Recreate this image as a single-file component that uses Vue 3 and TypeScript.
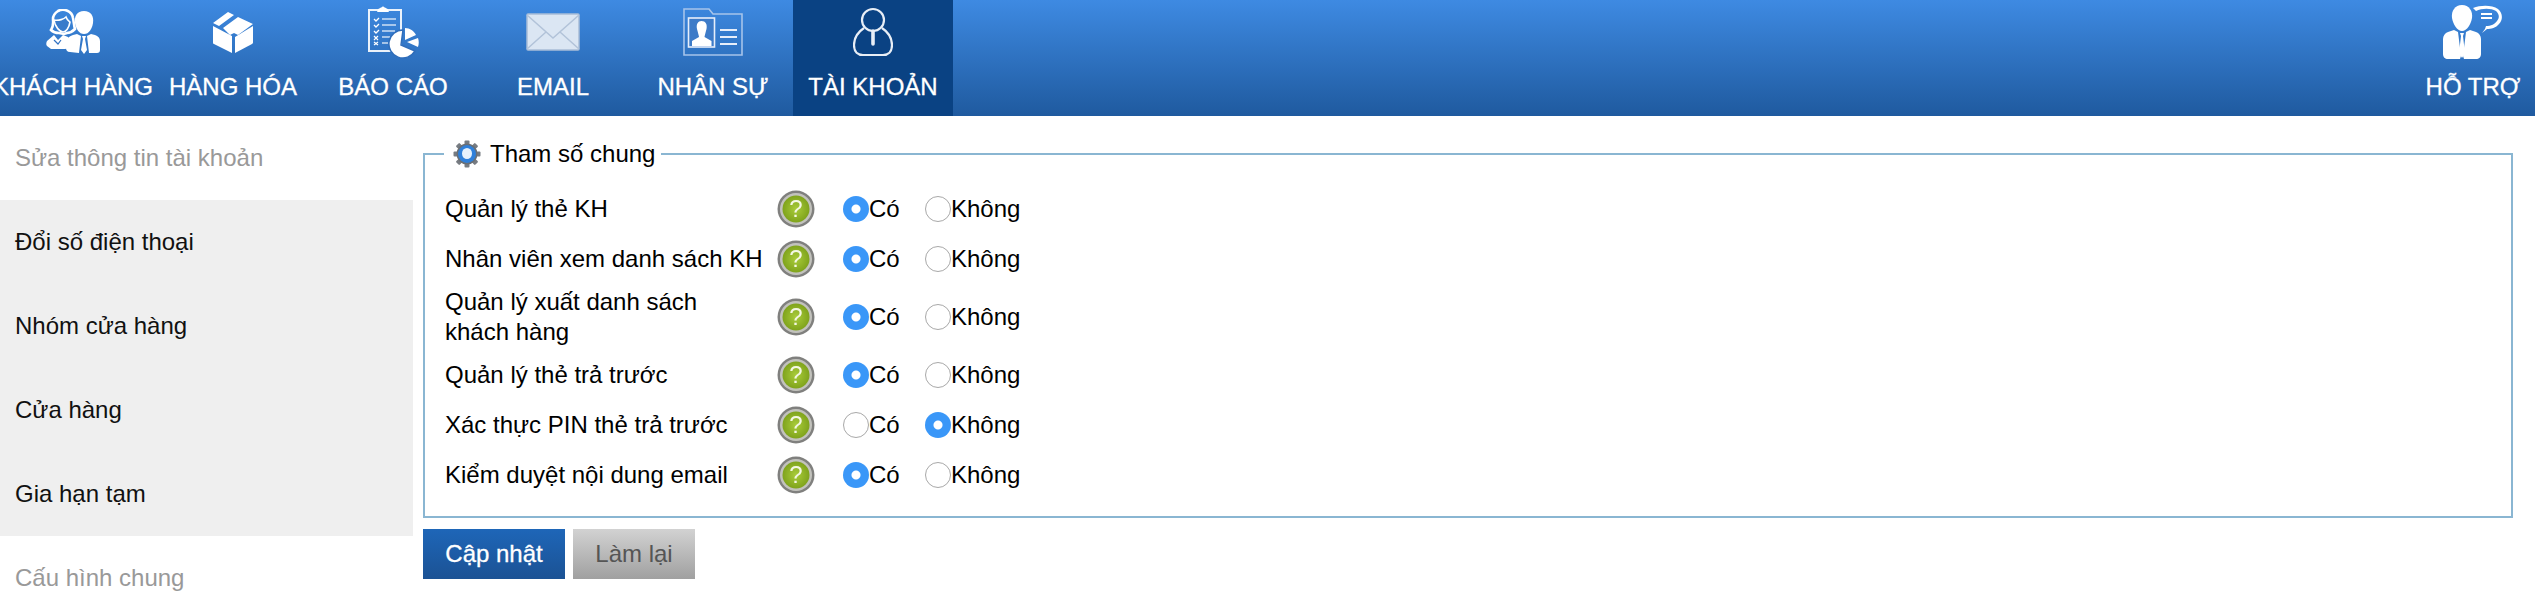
<template>
  <div class="page">
    <header class="topbar">
      <nav class="menu">
        <a v-for="item in menu" :key="item.label" class="menu-item" :class="{ active: item.active }">
          <span class="menu-icon">
            <svg v-if="item.icon === 'customer'" width="54" height="46" viewBox="0 0 54 46">
              <path d="M12 2c6-3 14 0 15 7 1 5 1 8 2 11-3 3-5 4-8 4l-3 1-5-1c-3 0-6-1-8-3 3-4 2-8 2-11 0-4 2-6 5-8z" fill="none" stroke="#fff" stroke-width="2.6" />
              <path d="M8 11c5 1 10-1 12-3 1 3 3 4 4 5-1 6-4 10-7 10s-8-5-9-12z" fill="#3a7ccb" stroke="#fff" stroke-width="1.6" />
              <path d="M8 26 1 32c-1 2-1 4 0 5l4 3h14c2 0 3-1 3-3v-9l-5-2-5 5z" fill="#fff" />
              <path d="M38 2c7 0 10 5 9 12-1 6-4 11-9 11s-8-5-9-11c-1-7 2-12 9-12z" fill="#fff" />
              <path d="M31 25l4 2-2 17-9-1c-3 0-4-2-4-4V34c0-5 4-7 7-8zM45 25l-4 2 2 17h8c2 0 3-1 3-3V32c0-3-2-5-5-6z" fill="#fff" />
              <path d="M36 27h4l-1 3 2 11-3 4-3-4 2-11z" fill="#fff" />
              <path d="M8 31l4 4 3-4" fill="none" stroke="#3272c2" stroke-width="1.200" />
            </svg>
            <svg v-else-if="item.icon === 'box'" width="42" height="44" viewBox="0 0 42 44">
              <path d="M1 13 16 2l6 3L7 16zM11 18 26 7l15 7-15 11-4-2-4 2z" fill="#fff" />
              <path d="M1 16l19 10v17L2 34c-1 0-1-1-1-2z" fill="#fff" />
              <path d="M41 16 23 27v16l17-9c1-1 1-1 1-2z" fill="#fff" />
            </svg>
            <svg v-else-if="item.icon === 'report'" width="54" height="54" viewBox="0 0 54 54">
              <path d="M3 5h32v41H3z" fill="none" stroke="#fff" stroke-width="2" opacity=".9" />
              <path d="M12 5c0-2 4-2 5-4 1 2 5 2 5 4l1 2H11z" fill="#fff" />
              <path d="M8 14l2 2 3-3M8 20l2 2 3-3M8 26l2 2 3-3" fill="none" stroke="#fff" stroke-width="1.300" />
              <path d="M8 31l4 4m0-4-4 4M8 37l4 3m0-3-4 3" stroke="#fff" stroke-width="1.200" />
              <path d="M16 14h14M16 20h14M16 26h13M16 32h8M16 38h6" stroke="#fff" stroke-width="1.600" opacity=".75" />
              <path d="M37 25a14 14 0 1 0 12 21l-14-6z" fill="#fff" stroke="#2f6dba" stroke-width="1.500" />
              <path d="M39 23c5 0 9 3 11 7l-11 5zM52 33c1 3 1 6 0 9l-11-5z" fill="#fff" />
            </svg>
            <svg v-else-if="item.icon === 'mail'" width="54" height="38" viewBox="0 0 54 38">
              <rect x="1" y="1" width="52" height="36" rx="1" fill="#dbe6f3" stroke="#a9bdd8" stroke-width="1.500" />
              <path d="M1 2 27 25 53 2M1 36l19-17M53 36 34 19" fill="none" stroke="#b2c3d9" stroke-width="1.500" />
            </svg>
            <svg v-else-if="item.icon === 'staff'" width="60" height="50" viewBox="0 0 60 50">
              <path d="M1 48V2h25l4 5h29v41z" fill="none" stroke="#a6c4ea" stroke-width="1.600" />
              <rect x="5.500" y="11" width="26" height="29" fill="#3d7bc8" stroke="#e6eefa" stroke-width="1.600" />
              <path d="M18.500 14c4 0 6 3 5 8-1 4-2 7-2 8l7 4v5H9v-5l7-4c0-1-1-4-2-8-1-5 1-8 4.500-8z" fill="#fff" />
              <path d="M37 23h17M37 30h17M37 37h17" stroke="#e6eefa" stroke-width="2.200" />
            </svg>
            <svg v-else-if="item.icon === 'account'" width="40" height="50" viewBox="0 0 40 50">
              <circle cx="20" cy="13" r="11" fill="none" stroke="#e8eef6" stroke-width="2.200" />
              <path d="M11 21C5 25 1 30 1 38c0 7 4 10 9 10h20c5 0 9-3 9-10 0-8-4-13-10-17" fill="none" stroke="#e8eef6" stroke-width="2.200" />
              <path d="M20 24v13" stroke="#e8eef6" stroke-width="3.600" stroke-linecap="round" />
            </svg>
          </span>
          <span class="menu-text">{{ item.label }}</span>
        </a>
      </nav>
      <a class="menu-item support">
        <span class="menu-icon">
          <svg width="62" height="56" viewBox="0 0 62 56">
            <path d="M20 1c7 0 11 6 10 13-1 6-5 13-10 13S11 20 10 14C9 7 13 1 20 1z" fill="#fff" />
            <path d="M12 26 6 28c-3 1-5 4-5 7v15c0 3 2 5 5 5h12l1-3-3-24zM28 26l6 2c3 1 5 4 5 7v15c0 3-2 5-5 5H22l-1-3 3-24z" fill="#fff" />
            <path d="M18 29h4l-1 3 2 17-3 5-3-5 2-17z" fill="#fff" />
            <path d="M31 4c8-3 19-3 25 1 5 4 5 11 1 15-3 4-8 5-12 5l-5 4 3-4 1-3c5 0 9-2 11-5 3-4 2-7-1-10-5-3-14-3-20 0z" fill="#fff" />
            <path d="M39 10h11M39 14h11" stroke="#fff" stroke-width="2" />
          </svg>
        </span>
        <span class="menu-text">HỖ TRỢ</span>
      </a>
    </header>

    <div class="body">
      <aside class="sidebar">
        <div v-for="link in links" :key="link.label" class="side-item" :class="{ muted: link.muted }">
          {{ link.label }}
        </div>
      </aside>

      <main class="content">
        <fieldset class="box">
          <legend class="box-title">
            <svg class="soft" width="28" height="28" viewBox="0 0 28 28">
              <g fill="#777c82">
                <rect v-for="deg in [0, 45, 90, 135, 180, 225, 270, 315]" :key="deg" x="11.500" y="0.500" width="5" height="5" rx="1" :transform="`rotate(${deg} 14 14)`" />
              </g>
              <circle cx="14" cy="14" r="10.500" fill="#6a6f75" />
              <circle cx="14" cy="14" r="9" fill="#2f80da" />
              <ellipse cx="14" cy="13.500" rx="5" ry="5.500" fill="#e6f1fc" />
            </svg>
            <span>Tham số chung</span>
          </legend>
          <div v-for="(row, i) in rows" :key="row.label" class="row" :class="{ tall: row.tall }">
            <div class="row-label">{{ row.label }}</div>
            <svg class="help soft" width="38" height="38" viewBox="0 0 38 38">
              <defs>
                <radialGradient id="helpFill">
                  <stop offset="0" stop-color="#a9cc3a" />
                  <stop offset="1" stop-color="#7fa31c" />
                </radialGradient>
              </defs>
              <circle cx="19" cy="19" r="18.500" fill="#80807e" />
              <circle cx="19" cy="19" r="16" fill="#c2c2bd" />
              <circle cx="19" cy="19" r="13.500" fill="url(#helpFill)" />
              <text x="19" y="27" text-anchor="middle" class="help-mark">?</text>
            </svg>
            <label class="choice">
              <input type="radio" :name="`opt${i}`" :checked="row.on" />Có
            </label>
            <label class="choice">
              <input type="radio" :name="`opt${i}`" :checked="!row.on" />Không
            </label>
          </div>
        </fieldset>
        <div class="actions">
          <button class="btn primary">Cập nhật</button>
          <button class="btn reset">Làm lại</button>
        </div>
      </main>
    </div>
  </div>
</template>

<script setup lang="ts">
type MenuItem = { label: string; icon: string; active?: boolean }

const menu: MenuItem[] = [
  { label: 'KHÁCH HÀNG', icon: 'customer' },
  { label: 'HÀNG HÓA', icon: 'box' },
  { label: 'BÁO CÁO', icon: 'report' },
  { label: 'EMAIL', icon: 'mail' },
  { label: 'NHÂN SỰ', icon: 'staff' },
  { label: 'TÀI KHOẢN', icon: 'account', active: true },
]

const links = [
  { label: 'Sửa thông tin tài khoản', muted: true },
  { label: 'Đổi số điện thoại' },
  { label: 'Nhóm cửa hàng' },
  { label: 'Cửa hàng' },
  { label: 'Gia hạn tạm' },
  { label: 'Cấu hình chung', muted: true },
]

const rows = [
  { label: 'Quản lý thẻ KH', on: true },
  { label: 'Nhân viên xem danh sách KH', on: true },
  { label: 'Quản lý xuất danh sách khách hàng', on: true, tall: true },
  { label: 'Quản lý thẻ trả trước', on: true },
  { label: 'Xác thực PIN thẻ trả trước', on: false },
  { label: 'Kiểm duyệt nội dung email', on: true },
]
</script>

<style>
html,
body {
  margin: 0;
  overflow: hidden;
  background: #fff;
}
</style>

<style scoped>
.page {
  width: 2535px;
  height: 614px;
  overflow: hidden;
  font-family: 'Liberation Sans', Arial, sans-serif;
  font-size: 24px;
  color: #000;
}

.topbar {
  display: flex;
  justify-content: space-between;
  height: 116px;
  background: linear-gradient(180deg, #3e8ae2 0%, #1f5a9f 100%);
}

.menu {
  display: flex;
  margin-left: -7px;
}

.menu-item {
  display: flex;
  flex-direction: column;
  align-items: center;
  width: 160px;
  height: 116px;
  color: #fff;
}

.menu-item.active {
  background: #0a4283;
}

.support {
  margin-right: -18px;
}

.menu-icon {
  display: flex;
  align-items: center;
  justify-content: center;
  height: 64px;
  filter: blur(0.4px);
}

.menu-text {
  margin-top: 9px;
  line-height: 28px;
  white-space: nowrap;
  -webkit-text-stroke: 0.3px #fff;
}

.body {
  display: flex;
}

.sidebar {
  width: 413px;
  flex-shrink: 0;
}

.side-item {
  display: flex;
  align-items: center;
  height: 84px;
  padding-left: 15px;
  background: #efefef;
  color: #111;
}

.side-item.muted {
  background: #fff;
  color: #999;
}

.content {
  flex: 1;
  padding: 24px 22px 0 10px;
}

.box {
  margin: 0;
  padding: 16px 20px 16px;
  box-sizing: border-box;
  border: 2px solid #8ab6d2;
  min-width: 0;
}

.box-title {
  display: flex;
  align-items: center;
  gap: 9px;
  margin-left: -1px;
  padding: 0 6px 0 9px;
  line-height: 28px;
}

.soft {
  filter: blur(0.6px);
}

.row {
  display: grid;
  grid-template-columns: 332px 66px 82px 1fr;
  align-items: center;
  height: 50px;
}

.row.tall {
  height: 66px;
}

.row-label {
  line-height: 30px;
  width: 320px;
}

.help {
  display: block;
}

.help-mark {
  font-family: 'Liberation Sans', Arial, sans-serif;
  font-size: 24px;
  fill: #f4f7e4;
}

.choice {
  display: flex;
  align-items: center;
}

.choice input {
  appearance: none;
  width: 26px;
  height: 26px;
  margin: 0;
  border: 1px solid #a8a8a8;
  border-radius: 50%;
  background: #fff;
}

.choice input:checked {
  border: 0;
  background: radial-gradient(circle, #fff 0 4px, #3a97f8 5px);
}

.actions {
  display: flex;
  gap: 8px;
  margin-top: 11px;
}

.btn {
  height: 50px;
  border: 0;
  padding: 0;
  font: inherit;
}

.primary {
  width: 142px;
  background: linear-gradient(180deg, #1e66b8 0%, #1b5294 100%);
  color: #fff;
  -webkit-text-stroke: 0.3px #fff;
}

.reset {
  width: 122px;
  background: linear-gradient(180deg, #d2d2d2 0%, #a0a0a0 100%);
  color: #555;
}
</style>
